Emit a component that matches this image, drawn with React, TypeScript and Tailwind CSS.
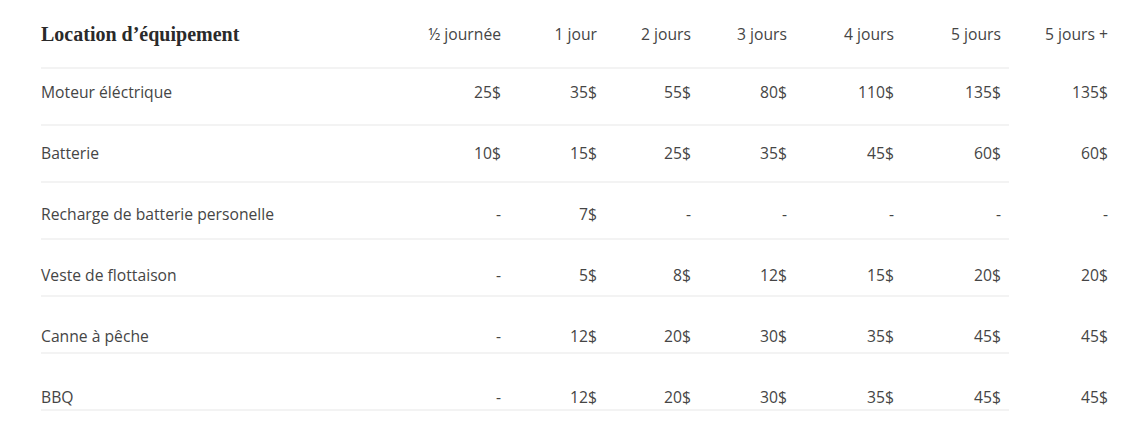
import React from "react";

const cols = ["½ journée", "1 jour", "2 jours", "3 jours", "4 jours", "5 jours", "5 jours +"];

const rows: { name: string; vals: string[]; pt: string; pb: string }[] = [
  { name: "Moteur éléctrique", vals: ["25$", "35$", "55$", "80$", "110$", "135$", "135$"], pt: "pt-[13px]", pb: "pb-[22px]" },
  { name: "Batterie", vals: ["10$", "15$", "25$", "35$", "45$", "60$", "60$"], pt: "pt-[17px]", pb: "pb-[18px]" },
  { name: "Recharge de batterie personelle", vals: ["-", "7$", "-", "-", "-", "-", "-"], pt: "pt-[21px]", pb: "pb-[14px]" },
  { name: "Veste de flottaison", vals: ["-", "5$", "8$", "12$", "15$", "20$", "20$"], pt: "pt-[25px]", pb: "pb-[10px]" },
  { name: "Canne à pêche", vals: ["-", "12$", "20$", "30$", "35$", "45$", "45$"], pt: "pt-[29px]", pb: "pb-[6px]" },
  { name: "BBQ", vals: ["-", "12$", "20$", "30$", "35$", "45$", "45$"], pt: "pt-[33px]", pb: "pb-[2px]" },
];

const grid = "grid grid-cols-[360px_100px_96px_94px_96px_107px_107px_107px] items-center h-[20px]";

export default function App() {
  return (
    <div className="w-[1136px] h-[444px] bg-white pl-[41px] pt-[24px] text-[15.7px] text-[#454545]" style={{ fontFamily: "'Open Sans', 'Noto Sans', sans-serif" }}>
      <div className={grid}>
        <div className="text-[20px] font-bold text-[#2a2a2a] leading-[20px]" style={{ fontFamily: "'Liberation Serif', 'DejaVu Serif', serif" }}>
          Location d’équipement
        </div>
        {cols.map((c) => (
          <div key={c} className="text-right leading-[20px]">{c}</div>
        ))}
      </div>
      <div className="w-[968px] h-[2px] bg-[#f3f3f3] mt-[23px]" />
      {rows.map((r) => (
        <div key={r.name}>
          <div className={r.pt + " " + r.pb}>
            <div className={grid}>
              <div className="leading-[20px]">{r.name}</div>
              {r.vals.map((v, i) => (
                <div key={i} className="text-right leading-[20px]">{v}</div>
              ))}
            </div>
          </div>
          <div className="w-[968px] h-[2px] bg-[#f3f3f3]" />
        </div>
      ))}
    </div>
  );
}
